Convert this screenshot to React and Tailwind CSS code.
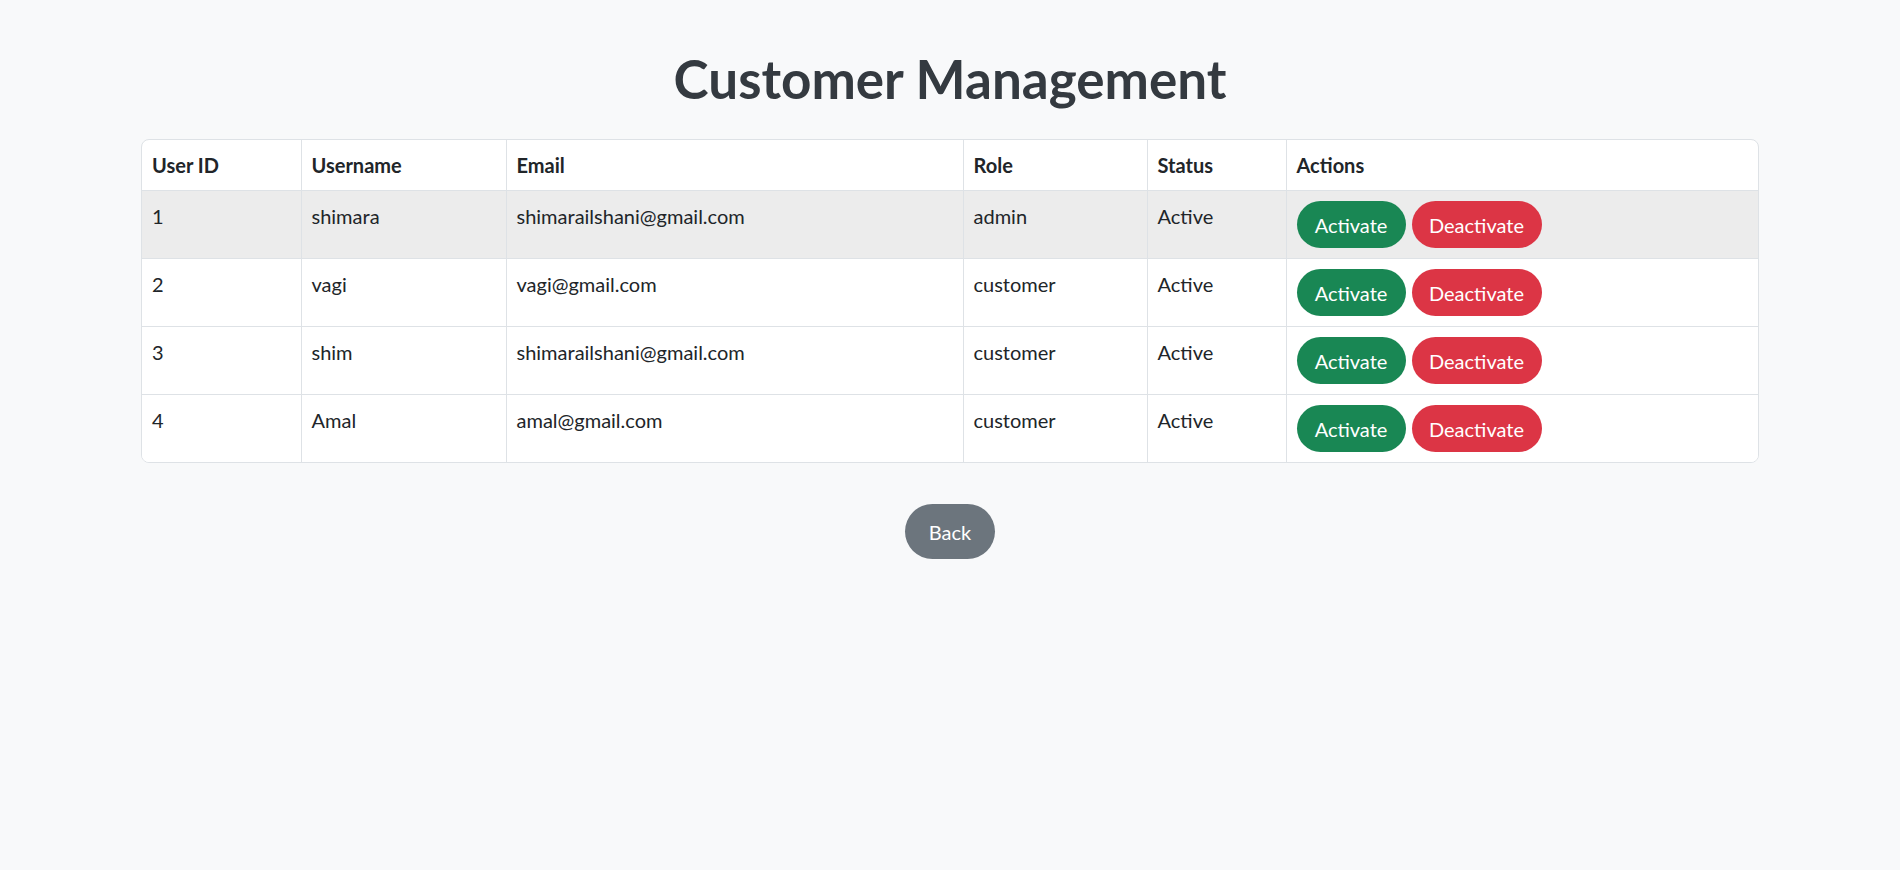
const users = [
  { id: 1, username: 'shimara', email: 'shimarailshani@gmail.com', role: 'admin', status: 'Active' },
  { id: 2, username: 'vagi', email: 'vagi@gmail.com', role: 'customer', status: 'Active' },
  { id: 3, username: 'shim', email: 'shimarailshani@gmail.com', role: 'customer', status: 'Active' },
  { id: 4, username: 'Amal', email: 'amal@gmail.com', role: 'customer', status: 'Active' },
];

export default function App() {
  return (
    <div className="min-h-[870px] bg-[#f8f9fa] text-[#212529] font-['Lato','Noto_Sans',sans-serif]">
      <div className="w-[1618px] mx-auto pt-[49px]">
        <h1 className="text-center text-[53px] leading-[60px] font-bold text-[#343a40] mb-[30px]">
          Customer Management
        </h1>

        <div className="bg-white border border-[#dee2e6] rounded-[8px] overflow-hidden">
          <table className="w-full border-collapse table-fixed text-[20px] leading-[30px]">
            <colgroup>
              <col className="w-[159px]" />
              <col className="w-[205px]" />
              <col className="w-[457px]" />
              <col className="w-[184px]" />
              <col className="w-[139px]" />
              <col />
            </colgroup>
            <thead>
              <tr className="border-b border-[#dee2e6]">
                {['User ID', 'Username', 'Email', 'Role', 'Status', 'Actions'].map((h, i) => (
                  <th
                    key={h}
                    className={`text-left font-bold px-[10px] py-[10px] ${i < 5 ? 'border-r border-[#dee2e6]' : ''}`}
                  >
                    {h}
                  </th>
                ))}
              </tr>
            </thead>
            <tbody>
              {users.map((u, idx) => (
                <tr
                  key={u.id}
                  className={`${idx < users.length - 1 ? 'border-b border-[#dee2e6]' : ''} ${idx === 0 ? 'bg-[#ececec]' : 'bg-white'}`}
                >
                  <td className="align-top px-[10px] py-[10px] border-r border-[#dee2e6]">{u.id}</td>
                  <td className="align-top px-[10px] py-[10px] border-r border-[#dee2e6]">{u.username}</td>
                  <td className="align-top px-[10px] py-[10px] border-r border-[#dee2e6]">{u.email}</td>
                  <td className="align-top px-[10px] py-[10px] border-r border-[#dee2e6]">{u.role}</td>
                  <td className="align-top px-[10px] py-[10px] border-r border-[#dee2e6]">{u.status}</td>
                  <td className="align-top px-[10px] py-[10px]">
                    <div className="flex gap-[6px]">
                      <button className="w-[109px] h-[47px] rounded-full bg-[#198754] text-white text-[20px] leading-[30px]">
                        Activate
                      </button>
                      <button className="w-[130px] h-[47px] rounded-full bg-[#dc3545] text-white text-[20px] leading-[30px]">
                        Deactivate
                      </button>
                    </div>
                  </td>
                </tr>
              ))}
            </tbody>
          </table>
        </div>

        <div className="flex justify-center mt-[41px]">
          <button className="w-[90px] h-[55px] rounded-full bg-[#6c757d] text-white text-[20px] leading-[30px]">
            Back
          </button>
        </div>
      </div>
    </div>
  );
}
